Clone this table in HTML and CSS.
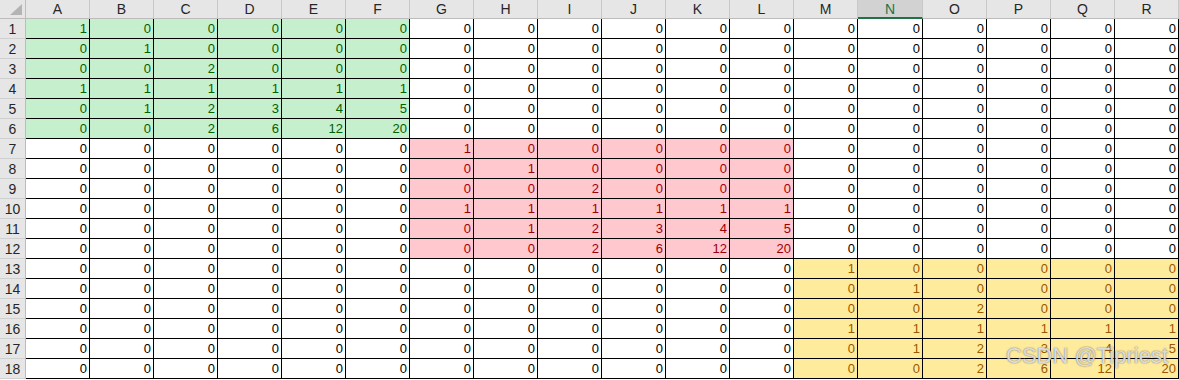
FILE: index.html
```html
<!DOCTYPE html>
<html>
<head>
<meta charset="utf-8">
<link rel="stylesheet" href="styles.css">
</head>
<body>
<div class="sheet">
<div class="corner"></div>
<div class="ch">A</div><div class="ch">B</div><div class="ch">C</div><div class="ch">D</div><div class="ch">E</div><div class="ch">F</div><div class="ch">G</div><div class="ch">H</div><div class="ch">I</div><div class="ch">J</div><div class="ch">K</div><div class="ch">L</div><div class="ch">M</div><div class="ch sel">N</div><div class="ch">O</div><div class="ch">P</div><div class="ch">Q</div><div class="ch">R</div>

<div class="rh">1</div><div class="c g">1</div><div class="c g">0</div><div class="c g">0</div><div class="c g">0</div><div class="c g">0</div><div class="c g">0</div><div class="c">0</div><div class="c">0</div><div class="c">0</div><div class="c">0</div><div class="c">0</div><div class="c">0</div><div class="c">0</div><div class="c">0</div><div class="c">0</div><div class="c">0</div><div class="c">0</div><div class="c">0</div>
<div class="rh">2</div><div class="c g">0</div><div class="c g">1</div><div class="c g">0</div><div class="c g">0</div><div class="c g">0</div><div class="c g">0</div><div class="c">0</div><div class="c">0</div><div class="c">0</div><div class="c">0</div><div class="c">0</div><div class="c">0</div><div class="c">0</div><div class="c">0</div><div class="c">0</div><div class="c">0</div><div class="c">0</div><div class="c">0</div>
<div class="rh">3</div><div class="c g">0</div><div class="c g">0</div><div class="c g">2</div><div class="c g">0</div><div class="c g">0</div><div class="c g">0</div><div class="c">0</div><div class="c">0</div><div class="c">0</div><div class="c">0</div><div class="c">0</div><div class="c">0</div><div class="c">0</div><div class="c">0</div><div class="c">0</div><div class="c">0</div><div class="c">0</div><div class="c">0</div>
<div class="rh">4</div><div class="c g">1</div><div class="c g">1</div><div class="c g">1</div><div class="c g">1</div><div class="c g">1</div><div class="c g">1</div><div class="c">0</div><div class="c">0</div><div class="c">0</div><div class="c">0</div><div class="c">0</div><div class="c">0</div><div class="c">0</div><div class="c">0</div><div class="c">0</div><div class="c">0</div><div class="c">0</div><div class="c">0</div>
<div class="rh">5</div><div class="c g">0</div><div class="c g">1</div><div class="c g">2</div><div class="c g">3</div><div class="c g">4</div><div class="c g">5</div><div class="c">0</div><div class="c">0</div><div class="c">0</div><div class="c">0</div><div class="c">0</div><div class="c">0</div><div class="c">0</div><div class="c">0</div><div class="c">0</div><div class="c">0</div><div class="c">0</div><div class="c">0</div>
<div class="rh">6</div><div class="c g">0</div><div class="c g">0</div><div class="c g">2</div><div class="c g">6</div><div class="c g">12</div><div class="c g">20</div><div class="c">0</div><div class="c">0</div><div class="c">0</div><div class="c">0</div><div class="c">0</div><div class="c">0</div><div class="c">0</div><div class="c">0</div><div class="c">0</div><div class="c">0</div><div class="c">0</div><div class="c">0</div>

<div class="rh">7</div><div class="c">0</div><div class="c">0</div><div class="c">0</div><div class="c">0</div><div class="c">0</div><div class="c">0</div><div class="c r">1</div><div class="c r">0</div><div class="c r">0</div><div class="c r">0</div><div class="c r">0</div><div class="c r">0</div><div class="c">0</div><div class="c">0</div><div class="c">0</div><div class="c">0</div><div class="c">0</div><div class="c">0</div>
<div class="rh">8</div><div class="c">0</div><div class="c">0</div><div class="c">0</div><div class="c">0</div><div class="c">0</div><div class="c">0</div><div class="c r">0</div><div class="c r">1</div><div class="c r">0</div><div class="c r">0</div><div class="c r">0</div><div class="c r">0</div><div class="c">0</div><div class="c">0</div><div class="c">0</div><div class="c">0</div><div class="c">0</div><div class="c">0</div>
<div class="rh">9</div><div class="c">0</div><div class="c">0</div><div class="c">0</div><div class="c">0</div><div class="c">0</div><div class="c">0</div><div class="c r">0</div><div class="c r">0</div><div class="c r">2</div><div class="c r">0</div><div class="c r">0</div><div class="c r">0</div><div class="c">0</div><div class="c">0</div><div class="c">0</div><div class="c">0</div><div class="c">0</div><div class="c">0</div>
<div class="rh">10</div><div class="c">0</div><div class="c">0</div><div class="c">0</div><div class="c">0</div><div class="c">0</div><div class="c">0</div><div class="c r">1</div><div class="c r">1</div><div class="c r">1</div><div class="c r">1</div><div class="c r">1</div><div class="c r">1</div><div class="c">0</div><div class="c">0</div><div class="c">0</div><div class="c">0</div><div class="c">0</div><div class="c">0</div>
<div class="rh">11</div><div class="c">0</div><div class="c">0</div><div class="c">0</div><div class="c">0</div><div class="c">0</div><div class="c">0</div><div class="c r">0</div><div class="c r">1</div><div class="c r">2</div><div class="c r">3</div><div class="c r">4</div><div class="c r">5</div><div class="c">0</div><div class="c">0</div><div class="c">0</div><div class="c">0</div><div class="c">0</div><div class="c">0</div>
<div class="rh">12</div><div class="c">0</div><div class="c">0</div><div class="c">0</div><div class="c">0</div><div class="c">0</div><div class="c">0</div><div class="c r">0</div><div class="c r">0</div><div class="c r">2</div><div class="c r">6</div><div class="c r">12</div><div class="c r">20</div><div class="c">0</div><div class="c">0</div><div class="c">0</div><div class="c">0</div><div class="c">0</div><div class="c">0</div>

<div class="rh">13</div><div class="c">0</div><div class="c">0</div><div class="c">0</div><div class="c">0</div><div class="c">0</div><div class="c">0</div><div class="c">0</div><div class="c">0</div><div class="c">0</div><div class="c">0</div><div class="c">0</div><div class="c">0</div><div class="c y">1</div><div class="c y">0</div><div class="c y">0</div><div class="c y">0</div><div class="c y">0</div><div class="c y">0</div>
<div class="rh">14</div><div class="c">0</div><div class="c">0</div><div class="c">0</div><div class="c">0</div><div class="c">0</div><div class="c">0</div><div class="c">0</div><div class="c">0</div><div class="c">0</div><div class="c">0</div><div class="c">0</div><div class="c">0</div><div class="c y">0</div><div class="c y">1</div><div class="c y">0</div><div class="c y">0</div><div class="c y">0</div><div class="c y">0</div>
<div class="rh">15</div><div class="c">0</div><div class="c">0</div><div class="c">0</div><div class="c">0</div><div class="c">0</div><div class="c">0</div><div class="c">0</div><div class="c">0</div><div class="c">0</div><div class="c">0</div><div class="c">0</div><div class="c">0</div><div class="c y">0</div><div class="c y">0</div><div class="c y">2</div><div class="c y">0</div><div class="c y">0</div><div class="c y">0</div>
<div class="rh">16</div><div class="c">0</div><div class="c">0</div><div class="c">0</div><div class="c">0</div><div class="c">0</div><div class="c">0</div><div class="c">0</div><div class="c">0</div><div class="c">0</div><div class="c">0</div><div class="c">0</div><div class="c">0</div><div class="c y">1</div><div class="c y">1</div><div class="c y">1</div><div class="c y">1</div><div class="c y">1</div><div class="c y">1</div>
<div class="rh">17</div><div class="c">0</div><div class="c">0</div><div class="c">0</div><div class="c">0</div><div class="c">0</div><div class="c">0</div><div class="c">0</div><div class="c">0</div><div class="c">0</div><div class="c">0</div><div class="c">0</div><div class="c">0</div><div class="c y">0</div><div class="c y">1</div><div class="c y">2</div><div class="c y">3</div><div class="c y">4</div><div class="c y">5</div>
<div class="rh">18</div><div class="c">0</div><div class="c">0</div><div class="c">0</div><div class="c">0</div><div class="c">0</div><div class="c">0</div><div class="c">0</div><div class="c">0</div><div class="c">0</div><div class="c">0</div><div class="c">0</div><div class="c">0</div><div class="c y">0</div><div class="c y">0</div><div class="c y">2</div><div class="c y">6</div><div class="c y">12</div><div class="c y">20</div>
</div>
<div class="watermark">CSDN @Tipriest</div>
</body>
</html>
```
FILE: styles.css
```css
* { box-sizing: border-box; }
html, body { margin: 0; padding: 0; background: #ffffff; }
body {
  width: 1179px;
  height: 380px;
  overflow: hidden;
  position: relative;
  font-family: "Liberation Sans", Arial, sans-serif;
  font-size: 13px;
}
.sheet {
  display: grid;
  grid-template-columns: 26px repeat(13, 64px) 65px repeat(4, 64px);
  grid-template-rows: 19px repeat(18, 20px);
}
.corner {
  position: relative;
  background: #e6e6e6;
  border-right: 1px solid #bcbcbc;
  border-bottom: 1px solid #bcbcbc;
}
.corner::after {
  content: "";
  position: absolute;
  right: 3px;
  bottom: 3px;
  width: 0;
  height: 0;
  border-left: 12px solid transparent;
  border-bottom: 11px solid #b4b4b4;
}
.ch {
  background: #e6e6e6;
  border-right: 1px solid #c8c8c8;
  border-bottom: 1px solid #bcbcbc;
  color: #262626;
  text-align: center;
  line-height: 19px;
  font-size: 14px;
}
.ch.sel {
  background: #d2d2d2;
  color: #217346;
  border-bottom: 2px solid #217346;
  line-height: 18px;
}
.rh {
  background: #e6e6e6;
  border-right: 1px solid #bcbcbc;
  border-bottom: 1px solid #d0d0d0;
  color: #262626;
  text-align: center;
  line-height: 20px;
  font-size: 14px;
}
.c {
  border-right: 1px solid #000;
  border-bottom: 1px solid #000;
  text-align: right;
  padding-right: 2px;
  line-height: 20px;
  color: #000;
}
.g { background: #c6efce; color: #006100; }
.r { background: #ffc7ce; color: #9c0006; }
.y { background: #ffeb9c; color: #9c5700; }
.watermark {
  position: absolute;
  left: 1006px;
  top: 343px;
  font-size: 22px;
  color: rgba(255, 255, 255, 0.75);
  text-shadow: 0 0 1px rgba(90, 90, 90, 0.8), 0 0 2px rgba(120, 120, 120, 0.6);
  white-space: nowrap;
}
```
